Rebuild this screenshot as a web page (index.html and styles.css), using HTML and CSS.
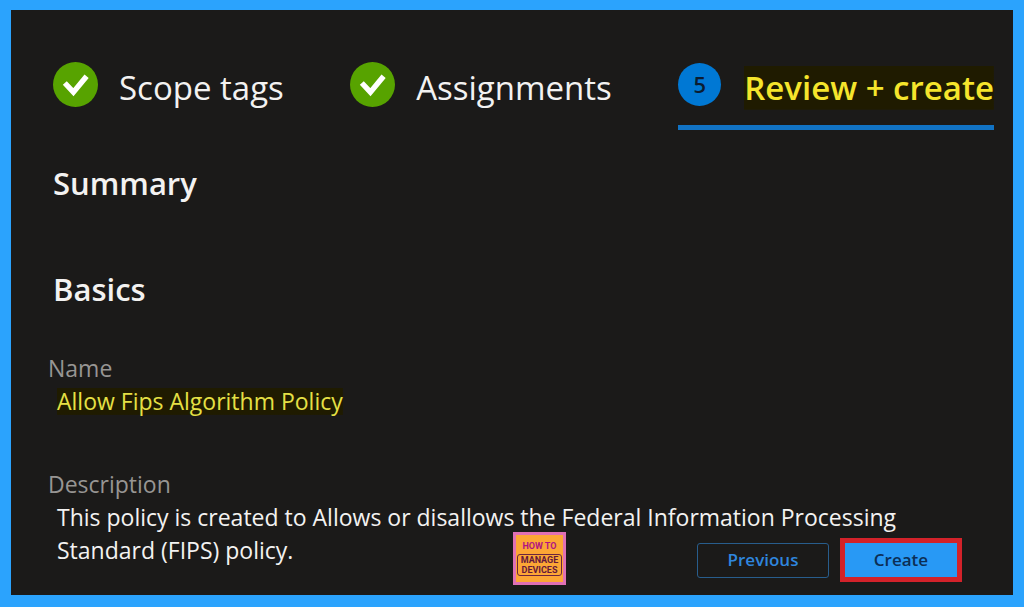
FILE: index.html
```html
<!DOCTYPE html>
<html lang="en">
<head>
<meta charset="utf-8">
<meta name="viewport" content="width=device-width, initial-scale=1">
<title>Review + create</title>
<link rel="stylesheet" href="styles.css">
</head>
<body>
<main class="frame">
  <div class="content">
    <nav class="steps" aria-label="Wizard steps">
      <button class="step" type="button">
        <svg class="step-icon" viewBox="0 0 45 45" aria-hidden="true"><circle cx="22.5" cy="22.5" r="22.5" fill="#57a300"/><path d="M11.8 21l8.6 9.2L33.6 14.2" fill="none" stroke="#fff" stroke-width="5.4"/></svg>
        <span>Scope tags</span>
      </button>
      <button class="step" type="button">
        <svg class="step-icon" viewBox="0 0 45 45" aria-hidden="true"><circle cx="22.5" cy="22.5" r="22.5" fill="#57a300"/><path d="M11.8 21l8.6 9.2L33.6 14.2" fill="none" stroke="#fff" stroke-width="5.4"/></svg>
        <span>Assignments</span>
      </button>
      <button class="step step-current" type="button" aria-current="step">
        <span class="step-number">5</span>
        <span class="marker">Review + create</span>
      </button>
    </nav>
    <h1 class="heading">Summary</h1>
    <h2 class="heading heading-basics">Basics</h2>
    <dl class="details">
      <div class="detail">
        <dt>Name</dt>
        <dd><span class="marker">Allow Fips Algorithm Policy</span></dd>
      </div>
      <div class="detail">
        <dt>Description</dt>
        <dd>This policy is created to Allows or disallows the Federal Information Processing Standard (FIPS) policy.</dd>
      </div>
    </dl>
  </div>
  <footer class="footer">
    <div class="logo">
      <span class="logo-top">HOW TO</span>
      <span class="logo-box"><span>MANAGE</span><span>DEVICES</span></span>
    </div>
    <div class="actions">
      <button class="button" type="button">Previous</button>
      <button class="button button-primary" type="button">Create</button>
    </div>
  </footer>
</main>
</body>
</html>
```
FILE: styles.css
```css
* {
  box-sizing: border-box;
}

body {
  margin: 0;
  background: #1b1a19;
  color: #f3f2f1;
  font-family: "Open Sans", "Noto Sans", sans-serif;
}

.frame {
  display: grid;
  min-height: 100vh;
  border: solid #2ba3fd;
  border-width: 10px 11px 12px;
}

.content,
.footer {
  grid-area: 1 / 1;
}

.content {
  padding: 52px 19px 20px 42px;
}

.steps {
  display: flex;
  justify-content: space-between;
}

.step {
  display: flex;
  align-items: flex-start;
  gap: 21px;
  height: 68px;
  padding: 0;
  border: 0;
  background: none;
  color: inherit;
  font: 400 33px/52px "Open Sans", "Noto Sans", sans-serif;
  white-space: nowrap;
}

.step-icon {
  width: 45px;
  height: 45px;
}

.step-current {
  gap: 23px;
  border-bottom: 5px solid #1173c5;
  font-weight: 600;
}

.step-number {
  width: 43px;
  height: 43px;
  margin-top: 1px;
  border-radius: 50%;
  background: #0078d4;
  color: #0b1c30;
  font-size: 22px;
  line-height: 43px;
  text-align: center;
}

.marker {
  background: linear-gradient(#1f1b00, #1f1b00) center / 100% 84% no-repeat;
  color: #f5e52c;
}

.heading {
  margin: 32px 0 0;
  font-size: 31px;
  font-weight: 600;
  line-height: 42px;
}

.heading-basics {
  margin-top: 64px;
}

.details {
  margin: 42px 0 0 -5px;
  font-size: 23px;
  line-height: 33px;
}

.detail + .detail {
  margin-top: 50px;
}

.details dt {
  color: #979593;
}

.details dd {
  margin: 0 64px 0 9px;
}

.details .marker {
  color: #e5e045;
}

.footer {
  display: flex;
  align-items: center;
  align-self: end;
  justify-self: end;
  gap: 131px;
  padding: 0 51px 10px 0;
}

.logo {
  display: flex;
  flex-direction: column;
  align-items: center;
  width: 53px;
  height: 53px;
  padding-top: 4px;
  border: 3px solid #e070b4;
  background: #fca635;
  font: 700 9px/14px "Roboto", sans-serif;
}

.logo-top {
  color: #b01482;
}

.logo-box {
  display: flex;
  flex-direction: column;
  align-items: center;
  width: 45px;
  margin-top: 1px;
  border: 1px solid #6b2540;
  border-radius: 3px;
  color: #64183c;
  line-height: 10px;
}

.actions {
  display: flex;
  align-items: center;
  gap: 11px;
  padding-top: 3px;
}

.button {
  width: 132px;
  height: 35px;
  padding: 0;
  border: 1px solid #285d8c;
  border-radius: 3px;
  background: #1b1a19;
  color: #2f86de;
  font: 600 17px/24px "Open Sans", "Noto Sans", sans-serif;
}

.button-primary {
  width: 122px;
  height: 44px;
  border: 5px solid #d3222a;
  border-radius: 0;
  background: #2899f5;
  color: #0c2f55;
}
```
